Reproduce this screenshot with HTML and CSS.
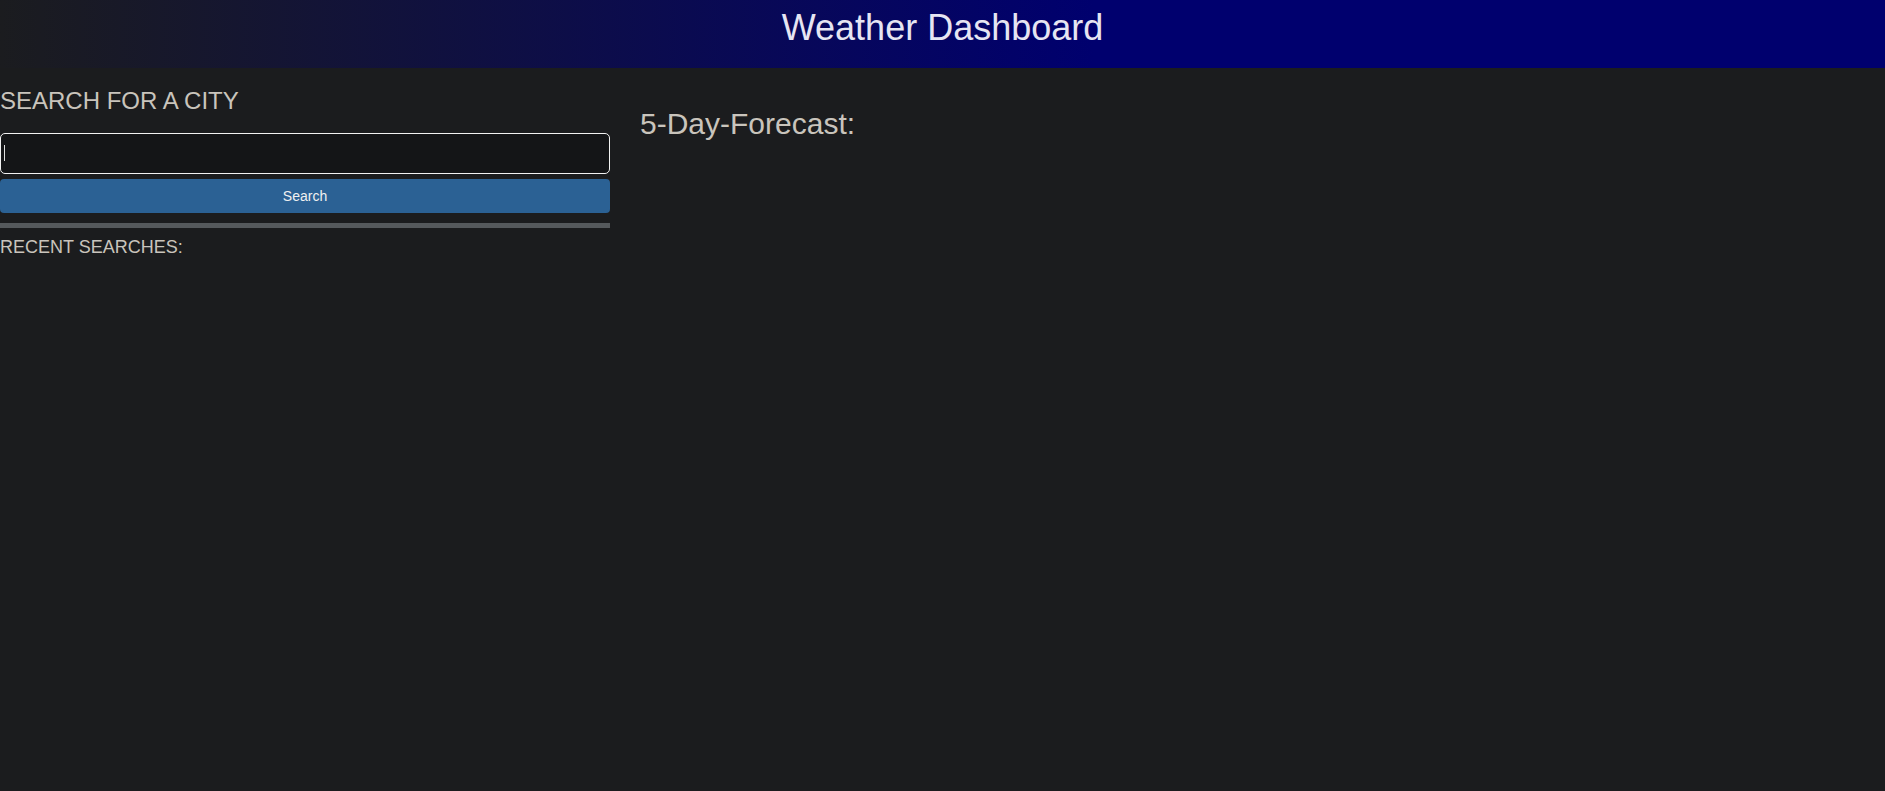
FILE: index.html
```html
<!DOCTYPE html>
<html lang="en">
<head>
<meta charset="utf-8">
<title>Weather Dashboard</title>
<link rel="stylesheet" href="styles.css">
</head>
<body>
<header class="site-header">
  <h1 class="site-title">Weather Dashboard</h1>
</header>
<main class="layout">
  <section class="sidebar">
    <h2 class="search-title">SEARCH FOR A CITY</h2>
    <div class="input-wrap">
      <input class="city-input" type="text" aria-label="City">
      <span class="caret"></span>
    </div>
    <button class="search-btn" type="button">Search</button>
    <hr class="divider">
    <h3 class="recent-title">RECENT SEARCHES:</h3>
  </section>
  <section class="forecast">
    <h2 class="forecast-title">5-Day-Forecast:</h2>
  </section>
</main>
</body>
</html>
```

FILE: styles.css
```css
* { box-sizing: border-box; }

html, body {
  margin: 0;
  padding: 0;
  background: #1b1c1e;
  font-family: "Liberation Sans", Arial, sans-serif;
  color: #c9c4bc;
  min-height: 100%;
}

.site-header {
  height: 68px;
  background: linear-gradient(to right, #1b1c1f 0%, #00006e 58%, #00006e 100%);
  display: flex;
  justify-content: center;
}

.site-title {
  margin: 0;
  font-size: 36px;
  font-weight: 400;
  line-height: 42px;
  padding-top: 7px;
  color: #e6e5f2;
}

.layout {
  display: grid;
  grid-template-columns: 610px 1fr;
  column-gap: 30px;
}

.sidebar {
  display: flex;
  flex-direction: column;
  padding-top: 18px;
}

.search-title {
  margin: 0 0 18px 0;
  font-size: 24px;
  font-weight: 400;
  line-height: 29px;
}

.input-wrap {
  position: relative;
}

.city-input {
  display: block;
  width: 100%;
  height: 41px;
  margin: 0;
  background: #141517;
  border: 1px solid #f2f2f2;
  border-radius: 5px;
  outline: none;
  color: #e6e5e2;
  font-family: inherit;
  font-size: 16px;
  padding: 0 8px;
}

.caret {
  position: absolute;
  left: 4px;
  top: 12px;
  width: 1px;
  height: 16px;
  background: #e0e0e0;
}

.search-btn {
  margin-top: 5px;
  height: 34px;
  width: 100%;
  background: #2b6194;
  border: none;
  border-radius: 4px;
  color: #f0f0f0;
  font-family: inherit;
  font-size: 14px;
}

.divider {
  margin: 10px 0 0 0;
  height: 5px;
  border: none;
  background: #55595c;
}

.recent-title {
  margin: 8px 0 0 0;
  font-size: 18px;
  font-weight: 400;
  line-height: 22px;
}

.forecast {
  padding-top: 38px;
}

.forecast-title {
  margin: 0;
  font-size: 30px;
  font-weight: 400;
  line-height: 36px;
}
```
